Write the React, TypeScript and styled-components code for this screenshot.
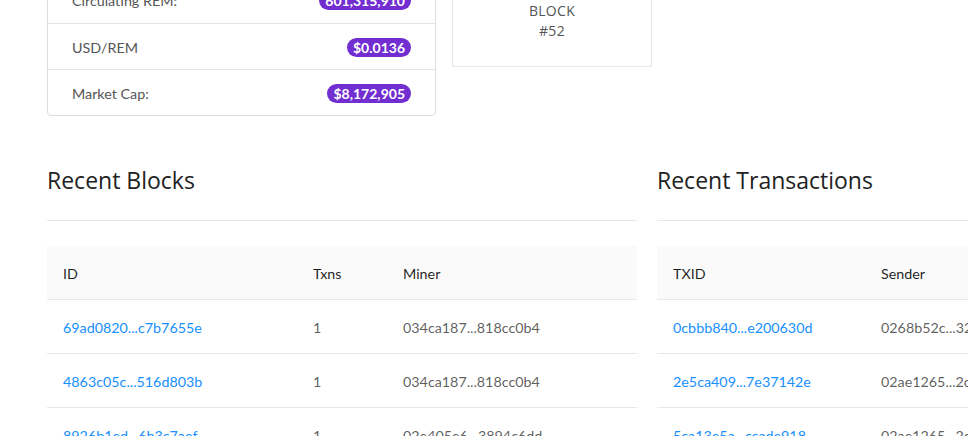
import React from "react";
import styled, { createGlobalStyle } from "styled-components";

const Global = createGlobalStyle`
  html, body { margin: 0; padding: 0; background: #fff; overflow: hidden; }
  body { font-family: "Lato", "Liberation Sans", sans-serif; font-size: 14.3px; color: rgba(0,0,0,0.65); }
  * { box-sizing: border-box; }
`;

const Page = styled.div`
  width: 1300px;
  padding: 0 0 40px 47px;
  margin-top: -24px;
`;

const TopRow = styled.div`
  display: flex;
  align-items: flex-start;
  gap: 16px;
`;

const StatCard = styled.div`
  width: 389px;
  border: 1px solid #dcdcdc;
  border-radius: 4px;
  background: #fff;
`;

const StatRow = styled.div`
  height: 46px;
  display: flex;
  align-items: center;
  justify-content: space-between;
  padding: 1px 24px 0;
  border-top: 1px solid #e4e4e4;
  &:first-child { border-top: none; }
  color: #555;
  font-size: 14.3px;
`;

const Badge = styled.span`
  background: #722ed1;
  color: #fff;
  font-weight: 700;
  font-size: 14px;
  line-height: 19px;
  height: 19px;
  padding: 0 6px;
  border-radius: 10px;
`;

const BlockCard = styled.div`
  width: 200px;
  border: 1px solid #e8e8e8;
  padding: 24px 0 25px;
  text-align: center;
  font-family: "Open Sans", "Noto Sans", sans-serif;
  font-size: 14px;
  line-height: 20px;
  color: #555;
  letter-spacing: 0.3px;
`;

const Columns = styled.div`
  display: grid;
  grid-template-columns: 590px 590px;
  gap: 20px;
  margin-top: 47px;
`;

const Section = styled.section``;

const Heading = styled.h2`
  margin: 1px 0 0;
  font-family: "Open Sans", "Noto Sans", sans-serif;
  font-weight: 400;
  font-size: 23px;
  line-height: 32px;
  color: #222;
`;

const Rule = styled.hr`
  margin: 24px 0 25px;
  border: none;
  border-top: 1px solid #e8e8e8;
  height: 0;
`;

const Table = styled.table`
  width: 100%;
  border-collapse: collapse;
  table-layout: fixed;
`;

const Th = styled.th<{ $w?: number }>`
  ${(p) => (p.$w ? `width: ${p.$w}px;` : "")}
  text-align: left;
  font-weight: 400;
  color: rgba(0,0,0,0.88);
  background: #fafafa;
  padding: 17px 16px 15px;
  line-height: 21px;
  border-bottom: 1px solid #e8e8e8;
  white-space: nowrap;
`;

const Td = styled.td`
  padding: 17px 16px 15px;
  line-height: 21px;
  border-bottom: 1px solid #e8e8e8;
  white-space: nowrap;
  overflow: hidden;
  color: rgba(0,0,0,0.65);
`;

const Link = styled.a`
  color: #1890ff;
  text-decoration: none;
`;

const blocks = [
  ["69ad0820...c7b7655e", "1", "034ca187...818cc0b4"],
  ["4863c05c...516d803b", "1", "034ca187...818cc0b4"],
  ["8926b1ed...6b3c7aef", "1", "02e405e6...3894c6dd"],
];

const txs = [
  ["0cbbb840...e200630d", "0268b52c...32a1f0c9", "1,000 REM"],
  ["2e5ca409...7e37142e", "02ae1265...2c8d0b71", "500 REM"],
  ["5ca13e5a...ccade918", "02ae1265...2c8d0b71", "500 REM"],
];

export default function App() {
  return (
    <>
      <Global />
      <Page>
        <TopRow>
          <StatCard>
            <StatRow>
              <span>Circulating REM:</span>
              <Badge>601,315,910</Badge>
            </StatRow>
            <StatRow>
              <span>USD/REM</span>
              <Badge>$0.0136</Badge>
            </StatRow>
            <StatRow>
              <span>Market Cap:</span>
              <Badge>$8,172,905</Badge>
            </StatRow>
          </StatCard>
          <BlockCard>
            <div>BLOCK</div>
            <div>#52</div>
          </BlockCard>
        </TopRow>
        <Columns>
          <Section>
            <Heading>Recent Blocks</Heading>
            <Rule />
            <Table>
              <thead>
                <tr>
                  <Th $w={250}>ID</Th>
                  <Th $w={90}>Txns</Th>
                  <Th>Miner</Th>
                </tr>
              </thead>
              <tbody>
                {blocks.map((b) => (
                  <tr key={b[0]}>
                    <Td><Link href="#">{b[0]}</Link></Td>
                    <Td>{b[1]}</Td>
                    <Td>{b[2]}</Td>
                  </tr>
                ))}
              </tbody>
            </Table>
          </Section>
          <Section>
            <Heading>Recent Transactions</Heading>
            <Rule />
            <Table>
              <thead>
                <tr>
                  <Th $w={208}>TXID</Th>
                  <Th $w={200}>Sender</Th>
                  <Th>Amount</Th>
                </tr>
              </thead>
              <tbody>
                {txs.map((t) => (
                  <tr key={t[0]}>
                    <Td><Link href="#">{t[0]}</Link></Td>
                    <Td>{t[1]}</Td>
                    <Td>{t[2]}</Td>
                  </tr>
                ))}
              </tbody>
            </Table>
          </Section>
        </Columns>
      </Page>
    </>
  );
}
